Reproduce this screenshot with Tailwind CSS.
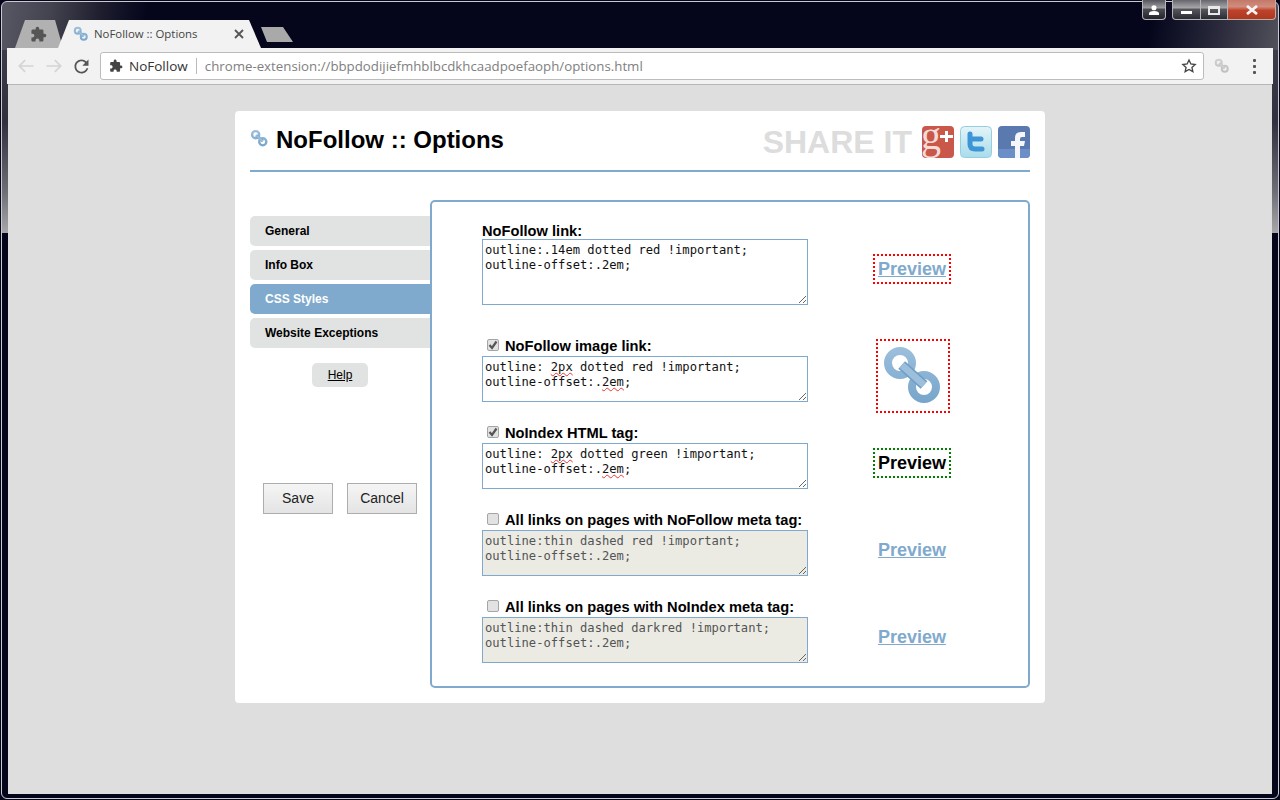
<!DOCTYPE html>
<html lang="en">
<head>
<meta charset="utf-8">
<title>NoFollow :: Options</title>
<script src="https://cdn.jsdelivr.net/npm/@tailwindcss/browser@4"></script>
</head>
<body class="m-0 h-[800px] w-[1280px] overflow-hidden bg-[#05051c] font-['Liberation_Sans',sans-serif]">
<svg class="absolute h-0 w-0" aria-hidden="true">
  <defs>
    <linearGradient id="lg" gradientUnits="userSpaceOnUse" x1="0" y1="4" x2="0" y2="60"><stop offset="0" stop-color="#9cbfdc"/><stop offset="1" stop-color="#76a4ca"/></linearGradient>
    <linearGradient id="tw" x1="0" y1="0" x2="0" y2="1"><stop offset="0" stop-color="#e4f4f8"/><stop offset="1" stop-color="#a9dcea"/></linearGradient>
    <symbol id="chain" viewBox="0 0 64 64">
      <circle cx="19" cy="19" r="12" fill="none" stroke="url(#lg)" stroke-width="8"/>
      <circle cx="43" cy="43" r="12" fill="none" stroke="url(#lg)" stroke-width="8"/>
      <path d="M20.700 21 L43 41" stroke="#6f9fc6" stroke-width="10"/>
      <path d="M20.700 21 L43 41" stroke="#9dbfdb" stroke-width="7"/>
    </symbol>
    <symbol id="puzzle" viewBox="0 0 24 24">
      <path d="M20.5 11H19V7c0-1.1-.9-2-2-2h-4V3.5C13 2.12 11.88 1 10.5 1S8 2.12 8 3.5V5H4c-1.1 0-1.99.9-1.99 2v3.8H3.5c1.49 0 2.7 1.21 2.7 2.7s-1.21 2.7-2.7 2.7H2V20c0 1.1.9 2 2 2h3.8v-1.5c0-1.49 1.21-2.7 2.7-2.7 1.49 0 2.7 1.21 2.7 2.7V22H17c1.1 0 2-.9 2-2v-4h1.5c1.38 0 2.5-1.12 2.5-2.5S21.88 11 20.5 11z"/>
    </symbol>
    <symbol id="grip" viewBox="0 0 10 10">
      <path d="M9 2 L2 9 M9 6 L6 9" stroke="#666" stroke-width="1" fill="none"/>
    </symbol>
    <symbol id="check" viewBox="0 0 12 12">
      <path d="M2.500 6 L5 9 L9.500 2.500" stroke="#555" stroke-width="2.200" fill="none"/>
    </symbol>
  </defs>
</svg>

<div class="relative h-[800px] w-[1280px] p-px">
  <div class="flex h-[798px] flex-col rounded-[6px] border border-[#c9c9d2] bg-[linear-gradient(to_bottom,#0000_231px,#04041a_231px),linear-gradient(180deg,#0000_0,#0000_48px,#3b3b49_48px,#30303f_120px,#6e6e76_190px,#a8a8aa_231px),linear-gradient(98deg,#585864_0,#43434f_50px,#1d1d2e_100px,#05051c_145px,#05051c_83%,#2a2a3c_88%,#56565f_93%,#666670_100%)] px-[6px] pb-[4px]">

    <!-- tab strip -->
    <div class="flex h-[46px] shrink-0 items-end pl-[7px]">
      <div class="flex h-[28px] w-[48px] items-center bg-[#b1b1b1] pl-[15px] [clip-path:polygon(0_100%,10px_0,40px_0,48px_100%)]">
        <svg class="h-[17px] w-[17px] fill-[#555]"><use href="#puzzle"/></svg>
      </div>
      <div class="-ml-[5px] flex h-[28px] w-[203px] items-center bg-[#f2f2f2] pl-[15px] [clip-path:polygon(0_100%,11px_0,191px_0,203px_100%)]">
        <svg class="h-[16px] w-[16px]"><use href="#chain"/></svg>
        <span class="ml-[5px] w-[134px] font-['Open_Sans',sans-serif] text-[11.400px] leading-[16px] text-[#444]">NoFollow :: Options</span>
        <svg class="ml-[6px] h-[10px] w-[10px]" viewBox="0 0 10 10"><path d="M1 1 L9 9 M9 1 L1 9" stroke="#555" stroke-width="1.800"/></svg>
      </div>
      <div class="mb-[6px] h-[15px] w-[32px] bg-[#a9a9a9] [clip-path:polygon(0_0,22px_0,32px_100%,6px_100%)]"></div>
    </div>

    <!-- toolbar -->
    <div class="-mx-px flex h-[36px] shrink-0 items-center bg-[#f2f2f2] pl-[9px]">
      <svg class="h-[20px] w-[20px] fill-none stroke-[#d4d4d4] stroke-2" viewBox="0 0 24 24"><path d="M21 12H4M11 5l-7 7 7 7"/></svg>
      <svg class="ml-[8px] h-[20px] w-[20px] fill-none stroke-[#d4d4d4] stroke-2" viewBox="0 0 24 24"><path d="M3 12h17M13 5l7 7-7 7"/></svg>
      <svg class="ml-[7px] h-[21px] w-[21px] fill-[#555]" viewBox="0 0 24 24"><path d="M17.65 6.35C16.2 4.9 14.21 4 12 4c-4.42 0-7.99 3.58-7.99 8s3.57 8 7.99 8c3.73 0 6.84-2.55 7.73-6h-2.08c-.82 2.33-3.04 4-5.65 4-3.31 0-6-2.69-6-6s2.69-6 6-6c1.66 0 3.14.69 4.22 1.78L13 11h7V4l-2.35 2.35z"/></svg>
      <div class="ml-[8px] flex h-[28px] w-[1104px] items-center rounded-[3px] border border-[#bcbcbc] bg-white pl-[8px] pr-[6px]">
        <svg class="h-[14px] w-[14px] fill-[#444]"><use href="#puzzle"/></svg>
        <span class="ml-[6px] font-['Open_Sans',sans-serif] text-[13.500px] leading-[18px] text-[#333]">NoFollow</span>
        <span class="ml-[8px] h-[16px] w-px bg-[#bbb]"></span>
        <span class="ml-[8px] font-['Open_Sans',sans-serif] text-[13.280px] leading-[18px] text-[#808080]">chrome-extension://bbpdodijiefmhblbcdkhcaadpoefaoph/options.html</span>
        <svg class="ml-auto h-[16px] w-[16px] fill-none stroke-[#444] stroke-2" viewBox="0 0 24 24"><path d="M12 3l2.800 6 6.400.7-4.800 4.400 1.400 6.400L12 17.200l-5.800 3.300 1.400-6.400L2.800 9.700 9.200 9z"/></svg>
      </div>
      <svg class="ml-[10px] h-[16px] w-[16px] opacity-60 grayscale"><use href="#chain"/></svg>
      <div class="ml-[23px] flex flex-col gap-[3px]">
        <span class="h-[3px] w-[3px] rounded-[1px] bg-[#555]"></span>
        <span class="h-[3px] w-[3px] rounded-[1px] bg-[#555]"></span>
        <span class="h-[3px] w-[3px] rounded-[1px] bg-[#555]"></span>
      </div>
    </div>

    <!-- page -->
    <div class="flex-1 border-t border-[#b5b5b5] bg-[#dedede] pt-[26px]">
      <div class="mx-auto w-[810px] rounded-[4px] bg-white px-[15px] pb-[15px]">

        <!-- header -->
        <div class="flex h-[61px] items-start border-b-2 border-[#7faacd]">
          <svg class="mt-[18px] h-[19px] w-[19px]"><use href="#chain"/></svg>
          <h1 class="ml-[7px] mt-[14px] text-[24px] font-bold leading-[30px] text-black">NoFollow :: Options</h1>
          <span class="ml-auto mt-[13px] text-[32px] font-bold leading-[36px] text-[#dddddd]">SHARE IT</span>
          <svg class="ml-[10px] mt-[15px] h-[32px] w-[32px] overflow-visible" viewBox="0 0 32 32">
            <rect width="32" height="32" rx="4" fill="#c9574a"/>
            <text x="-1" y="23" font-family="Liberation Serif" font-size="40" fill="#f3dcd8">g</text>
            <path d="M24.500 5v11M18 10.500h13" stroke="#fff" stroke-width="3"/>
          </svg>
          <svg class="ml-[6px] mt-[15px] h-[32px] w-[32px]" viewBox="0 0 32 32">
            <rect x=".5" y=".5" width="31" height="31" rx="4" fill="url(#tw)" stroke="#93cfe0"/>
            <path d="M10 8v10q0 5 5 5h7M10 13h11" fill="none" stroke="#3d95d8" stroke-width="5" stroke-linecap="round"/>
          </svg>
          <svg class="ml-[6px] mt-[15px] h-[32px] w-[32px]" viewBox="0 0 32 32">
            <rect width="32" height="32" rx="4" fill="#5a79ae"/>
            <path d="M0 23h32v5a4 4 0 0 1-4 4H4a4 4 0 0 1-4-4z" fill="#6b8fc6"/>
            <path d="M17 32V20h-4v-5h4v-3q0-6 6-6h4v5h-3q-2 0-2 2v2h5l-1 5h-4v12z" fill="#f4f6fa"/>
          </svg>
        </div>

        <!-- body -->
        <div class="mt-[28px] flex">
          <aside class="w-[180px] shrink-0 pt-[16px]">
            <nav class="flex flex-col gap-[4px]">
              <a class="flex h-[30px] items-center rounded-l-[5px] bg-[#e1e2e2] pl-[15px] text-[12px] font-bold text-black">General</a>
              <a class="flex h-[30px] items-center rounded-l-[5px] bg-[#e1e2e2] pl-[15px] text-[12px] font-bold text-black">Info Box</a>
              <a class="flex h-[30px] items-center rounded-l-[5px] bg-[#7faacd] pl-[15px] text-[12px] font-bold text-white">CSS Styles</a>
              <a class="flex h-[30px] items-center rounded-l-[5px] bg-[#e1e2e2] pl-[15px] text-[12px] font-bold text-black">Website Exceptions</a>
            </nav>
            <a class="mx-auto mt-[15px] flex h-[24px] w-[56px] items-center justify-center rounded-[5px] bg-[#e1e2e2] text-[12px] text-black underline">Help</a>
            <div class="ml-[13px] mt-[96px] flex gap-[14px]">
              <button class="h-[31px] w-[70px] border border-[#adadad] bg-[linear-gradient(#f5f5f5,#e4e4e4)] text-[14px] text-[#222]">Save</button>
              <button class="h-[31px] w-[70px] border border-[#adadad] bg-[linear-gradient(#f5f5f5,#e4e4e4)] text-[14px] text-[#222]">Cancel</button>
            </div>
          </aside>

          <main class="h-[488px] w-[600px] rounded-[5px] border-2 border-[#7faacd] pl-[50px] pt-[21px]">
            <!-- row 1 -->
            <div class="flex h-[82px]">
              <div class="w-[326px]">
                <div class="h-[16px] text-[14.670px] font-bold leading-[16px] text-black">NoFollow link:</div>
                <div class="relative h-[66px] border border-[#7faacd] bg-white px-[2px] pt-[3px] font-['DejaVu_Sans_Mono',monospace] text-[12.150px] leading-[15px] text-[#111]">
                  outline:.14em dotted red !important;<br>outline-offset:.2em;
                  <svg class="absolute bottom-0 right-0 h-[10px] w-[10px]"><use href="#grip"/></svg>
                </div>
              </div>
              <div class="flex w-[208px] justify-center pt-[31px]">
                <div class="flex h-[30px] w-[78px] items-center justify-center border-2 border-dotted border-[#ff0000]">
                  <a class="text-[18px] font-bold leading-[20px] text-[#7faacd] underline">Preview</a>
                </div>
              </div>
            </div>
            <!-- row 2 -->
            <div class="mt-[33px] flex h-[64px]">
              <div class="w-[326px]">
                <div class="flex h-[18px] items-center pl-[5px]">
                  <span class="-mt-[4px] h-[12px] w-[12px] rounded-[2px] border border-[#a5a5a5] bg-[#e2e2e2]"><svg class="-ml-px -mt-px h-[12px] w-[12px]"><use href="#check"/></svg></span>
                  <span class="-mt-[2px] ml-[6px] text-[14.670px] font-bold leading-[18px] text-black">NoFollow image link:</span>
                </div>
                <div class="relative h-[46px] border border-[#7faacd] bg-white px-[2px] pt-[3px] font-['DejaVu_Sans_Mono',monospace] text-[12.150px] leading-[15px] text-[#111]">
                  outline: <span class="underline decoration-[#e33] decoration-wavy decoration-1 [text-decoration-skip-ink:none]">2px</span> dotted red !important;<br>outline-offset:.<span class="underline decoration-[#e33] decoration-wavy decoration-1 [text-decoration-skip-ink:none]">2em</span>;
                  <svg class="absolute bottom-0 right-0 h-[10px] w-[10px]"><use href="#grip"/></svg>
                </div>
              </div>
              <div class="flex w-[208px] justify-center pt-px">
                <div class="ml-[2px] flex h-[74px] w-[74px] shrink-0 items-center justify-center border-2 border-dotted border-[#ff0000]">
                  <svg class="h-[64px] w-[64px]"><use href="#chain"/></svg>
                </div>
              </div>
            </div>
            <!-- row 3 -->
            <div class="mt-[23px] flex h-[64px]">
              <div class="w-[326px]">
                <div class="flex h-[18px] items-center pl-[5px]">
                  <span class="-mt-[4px] h-[12px] w-[12px] rounded-[2px] border border-[#a5a5a5] bg-[#e2e2e2]"><svg class="-ml-px -mt-px h-[12px] w-[12px]"><use href="#check"/></svg></span>
                  <span class="-mt-[2px] ml-[6px] text-[14.670px] font-bold leading-[18px] text-black">NoIndex HTML tag:</span>
                </div>
                <div class="relative h-[46px] border border-[#7faacd] bg-white px-[2px] pt-[3px] font-['DejaVu_Sans_Mono',monospace] text-[12.150px] leading-[15px] text-[#111]">
                  outline: <span class="underline decoration-[#e33] decoration-wavy decoration-1 [text-decoration-skip-ink:none]">2px</span> dotted green !important;<br>outline-offset:.<span class="underline decoration-[#e33] decoration-wavy decoration-1 [text-decoration-skip-ink:none]">2em</span>;
                  <svg class="absolute bottom-0 right-0 h-[10px] w-[10px]"><use href="#grip"/></svg>
                </div>
              </div>
              <div class="flex w-[208px] justify-center pt-[23px]">
                <div class="flex h-[30px] w-[78px] items-center justify-center border-2 border-dotted border-[#008000]">
                  <span class="text-[18px] font-bold leading-[20px] text-black">Preview</span>
                </div>
              </div>
            </div>
            <!-- row 4 -->
            <div class="mt-[23px] flex h-[64px]">
              <div class="w-[326px]">
                <div class="flex h-[18px] items-center pl-[5px]">
                  <span class="-mt-[4px] h-[12px] w-[12px] rounded-[2px] border border-[#a5a5a5] bg-[#e2e2e2]"></span>
                  <span class="-mt-[2px] ml-[6px] text-[14.670px] font-bold leading-[18px] text-black">All links on pages with NoFollow meta tag:</span>
                </div>
                <div class="relative h-[46px] border border-[#7faacd] bg-[#ebebe4] px-[2px] pt-[3px] font-['DejaVu_Sans_Mono',monospace] text-[12.150px] leading-[15px] text-[#545454]">
                  outline:thin dashed red !important;<br>outline-offset:.2em;
                  <svg class="absolute bottom-0 right-0 h-[10px] w-[10px]"><use href="#grip"/></svg>
                </div>
              </div>
              <div class="flex w-[208px] justify-center pt-[23px]">
                <div class="flex h-[30px] w-[78px] items-center justify-center">
                  <a class="text-[18px] font-bold leading-[20px] text-[#7faacd] underline">Preview</a>
                </div>
              </div>
            </div>
            <!-- row 5 -->
            <div class="mt-[23px] flex h-[64px]">
              <div class="w-[326px]">
                <div class="flex h-[18px] items-center pl-[5px]">
                  <span class="-mt-[4px] h-[12px] w-[12px] rounded-[2px] border border-[#a5a5a5] bg-[#e2e2e2]"></span>
                  <span class="-mt-[2px] ml-[6px] text-[14.670px] font-bold leading-[18px] text-black">All links on pages with NoIndex meta tag:</span>
                </div>
                <div class="relative h-[46px] border border-[#7faacd] bg-[#ebebe4] px-[2px] pt-[3px] font-['DejaVu_Sans_Mono',monospace] text-[12.150px] leading-[15px] text-[#545454]">
                  outline:thin dashed darkred !important;<br>outline-offset:.2em;
                  <svg class="absolute bottom-0 right-0 h-[10px] w-[10px]"><use href="#grip"/></svg>
                </div>
              </div>
              <div class="flex w-[208px] justify-center pt-[23px]">
                <div class="flex h-[30px] w-[78px] items-center justify-center">
                  <a class="text-[18px] font-bold leading-[20px] text-[#7faacd] underline">Preview</a>
                </div>
              </div>
            </div>
          </main>
        </div>
      </div>
    </div>
  </div>

  <!-- window controls -->
  <div class="absolute right-[4px] top-0 flex items-start">
    <div class="mr-[6px] flex h-[20px] w-[24px] items-center justify-center rounded-b-[4px] border border-t-0 border-[#b5b5b5] bg-[linear-gradient(#55555e,#9a9a9e_40%,#4a4a52_50%,#23232e)]">
      <svg class="mt-[2px] h-[11px] w-[12px] fill-white" viewBox="0 0 13 12"><circle cx="6.500" cy="3" r="2.800"/><path d="M1 9.500q0-3 5.500-3t5.500 3V11H1z"/></svg>
    </div>
    <div class="flex h-[20px] w-[29px] items-center justify-center rounded-bl-[4px] border border-t-0 border-[#b5b5b5] bg-[linear-gradient(#66666e,#a5a5a8_40%,#55555c_50%,#2a2a34)]">
      <span class="mt-[6px] h-[3px] w-[11px] bg-white"></span>
    </div>
    <div class="flex h-[20px] w-[27px] items-center justify-center border-b border-r border-[#b5b5b5] bg-[linear-gradient(#66666e,#a5a5a8_40%,#55555c_50%,#2a2a34)]">
      <span class="mt-[1px] h-[9px] w-[12px] border-2 border-t-[3px] border-[#e8e8ea]"></span>
    </div>
    <div class="flex h-[20px] w-[48px] items-center justify-center rounded-br-[4px] border-b border-r border-[#c9a8a0] bg-[linear-gradient(#c4796a,#d08c7c_35%,#c0412a_55%,#a93a22)]">
      <svg class="mt-[1px] h-[10px] w-[14px]" viewBox="0 0 14 10"><path d="M2 1 L12 9 M12 1 L2 9" stroke="#f4f4f4" stroke-width="2.800"/></svg>
    </div>
  </div>
</div>
</body>
</html>
